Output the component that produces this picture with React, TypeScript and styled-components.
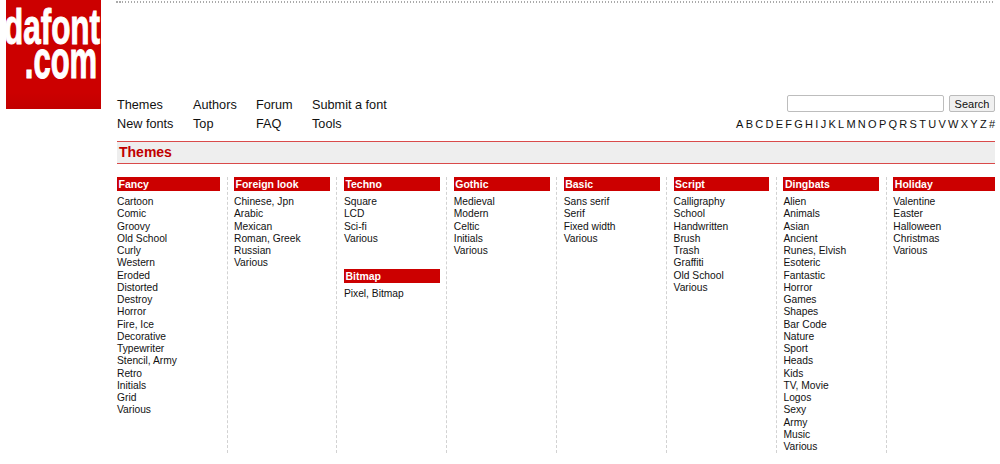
import React from 'react'
import styled, { createGlobalStyle } from 'styled-components'

const GlobalStyle = createGlobalStyle`
html, body {
  margin: 0;
  padding: 0;
  background: #fff;
  overflow: hidden;
}
body {
  font-family: "Liberation Sans", Arial, sans-serif;
  color: #111;
}
`

const navColumns = [
  { width: 76, items: ['Themes', 'New fonts'] },
  { width: 63, items: ['Authors', 'Top'] },
  { width: 56, items: ['Forum', 'FAQ'] },
  { width: 90, items: ['Submit a font', 'Tools'] },
]

const letters = 'ABCDEFGHIJKLMNOPQRSTUVWXYZ#'.split('')

type Section = { title: string; items: string[] }

const columns: { kind?: 'first' | 'last'; sections: Section[] }[] = [
  {
    kind: 'first',
    sections: [{
      title: 'Fancy',
      items: ['Cartoon', 'Comic', 'Groovy', 'Old School', 'Curly', 'Western', 'Eroded', 'Distorted', 'Destroy', 'Horror', 'Fire, Ice', 'Decorative', 'Typewriter', 'Stencil, Army', 'Retro', 'Initials', 'Grid', 'Various'],
    }],
  },
  { sections: [{ title: 'Foreign look', items: ['Chinese, Jpn', 'Arabic', 'Mexican', 'Roman, Greek', 'Russian', 'Various'] }] },
  {
    sections: [
      { title: 'Techno', items: ['Square', 'LCD', 'Sci-fi', 'Various'] },
      { title: 'Bitmap', items: ['Pixel, Bitmap'] },
    ],
  },
  { sections: [{ title: 'Gothic', items: ['Medieval', 'Modern', 'Celtic', 'Initials', 'Various'] }] },
  { sections: [{ title: 'Basic', items: ['Sans serif', 'Serif', 'Fixed width', 'Various'] }] },
  { sections: [{ title: 'Script', items: ['Calligraphy', 'School', 'Handwritten', 'Brush', 'Trash', 'Graffiti', 'Old School', 'Various'] }] },
  {
    sections: [{
      title: 'Dingbats',
      items: ['Alien', 'Animals', 'Asian', 'Ancient', 'Runes, Elvish', 'Esoteric', 'Fantastic', 'Horror', 'Games', 'Shapes', 'Bar Code', 'Nature', 'Sport', 'Heads', 'Kids', 'TV, Movie', 'Logos', 'Sexy', 'Army', 'Music', 'Various'],
    }],
  },
  { kind: 'last', sections: [{ title: 'Holiday', items: ['Valentine', 'Easter', 'Halloween', 'Christmas', 'Various'] }] },
]

const App = () => {
  return (
    <Page>
      <GlobalStyle />
      <Logo>
        <svg width="95" height="109" viewBox="0 0 95 109">
          <LogoWord transform="translate(46 44) scale(0.67 1.06)" textAnchor="middle" fontSize="47">dafont</LogoWord>
          <LogoWord transform="translate(55 78) scale(0.66 1.15)" textAnchor="middle" fontSize="47">.com</LogoWord>
        </svg>
      </Logo>
      <Main>
        <TopLine />
        <Header>
          <Nav>
            {navColumns.map((col) => (
              <NavColumn key={col.items[0]} $width={col.width}>
                {col.items.map((item) => <NavLink key={item}>{item}</NavLink>)}
              </NavColumn>
            ))}
          </Nav>
          <Tools>
            <SearchRow>
              <SearchInput />
              <SearchButton>Search</SearchButton>
            </SearchRow>
            <Letters>
              {letters.map((l) => <span key={l}>{l}</span>)}
            </Letters>
          </Tools>
        </Header>
        <TitleBar>Themes</TitleBar>
        <Columns>
          {columns.map((col) => (
            <Column key={col.sections[0].title} $kind={col.kind}>
              {col.sections.map((section) => (
                <SectionBlock key={section.title}>
                  <SectionTitle>{section.title}</SectionTitle>
                  <List>
                    {section.items.map((item) => <Item key={item}>{item}</Item>)}
                  </List>
                </SectionBlock>
              ))}
            </Column>
          ))}
        </Columns>
      </Main>
    </Page>
  )
}

export default App

const Page = styled.div`
display:flex;
align-items:flex-start;
width:1000px;
height:464px;
`

const Logo = styled.div`
flex:none;
width:95px;
height:109px;
margin:0 16px 0 6px;
background:linear-gradient(#cc0000 85%, #c20000);
overflow:hidden;
svg{ display:block; }
`

const LogoWord = styled.text`
font-family:"Liberation Sans", Arial, sans-serif;
font-weight:bold;
fill:#fff;
stroke:#fff;
stroke-width:1px;
`

const Main = styled.div`
flex:none;
width:878px;
`

const TopLine = styled.div`
height:2px;
margin-top:1px;
margin-left:-1px;
background:repeating-linear-gradient(90deg, #aaa 0 1.5px, transparent 1.5px 3px);
`

const Header = styled.div`
display:flex;
justify-content:space-between;
height:138px;
`

const Nav = styled.div`
display:flex;
padding-top:92.5px;
`

const NavColumn = styled.div<{ $width: number }>`
width:${(p) => p.$width}px;
`

const NavLink = styled.div`
font-size:12.7px;
line-height:19px;
white-space:nowrap;
color:#111;
`

const Tools = styled.div`
display:flex;
flex-direction:column;
align-items:flex-end;
padding-top:92px;
`

const SearchRow = styled.div`
display:flex;
align-items:center;
gap:5px;
`

const SearchInput = styled.input`
box-sizing:border-box;
width:157px;
height:17px;
padding:0;
border:1px solid #bdbdbd;
border-radius:2px;
background:#fff;
`

const SearchButton = styled.button`
box-sizing:border-box;
width:46px;
height:17px;
padding:0;
border:1px solid #bbb;
border-radius:2px;
background:#f0f0f0;
font-family:"Liberation Sans", Arial, sans-serif;
font-size:11px;
color:#111;
`

const Letters = styled.div`
display:flex;
gap:2.27px;
margin-top:6px;
font-size:11px;
line-height:13px;
color:#111;
`

const TitleBar = styled.div`
box-sizing:border-box;
height:23px;
padding-left:2px;
border-top:1px solid #d94a4a;
border-bottom:1px solid #d94a4a;
background:#eeeeee;
font-size:14px;
font-weight:bold;
line-height:20px;
color:#c00000;
`

const Columns = styled.div`
display:flex;
height:276px;
margin-top:13px;
`

const Column = styled.div<{ $kind?: 'first' | 'last' }>`
box-sizing:border-box;
flex:none;
width:${(p) => (p.$kind === 'first' ? 110.5 : p.$kind === 'last' ? 108 : 109.9)}px;
padding:0 ${(p) => (p.$kind === 'last' ? 0 : 6.5)}px 0 ${(p) => (p.$kind === 'first' ? 0 : 6.5)}px;
border-right:${(p) => (p.$kind === 'last' ? 'none' : '1px dashed #d2d2d2')};
`

const SectionBlock = styled.div`
margin-bottom:24px;
&:last-child{ margin-bottom:0; }
`

const SectionTitle = styled.div`
height:14px;
padding-left:1.5px;
background:#cc0000;
font-size:10.5px;
font-weight:bold;
line-height:14px;
color:#fff;
`

const List = styled.div`
margin-top:5px;
`

const Item = styled.div`
font-size:10.25px;
line-height:12.25px;
white-space:nowrap;
color:#111;
`
